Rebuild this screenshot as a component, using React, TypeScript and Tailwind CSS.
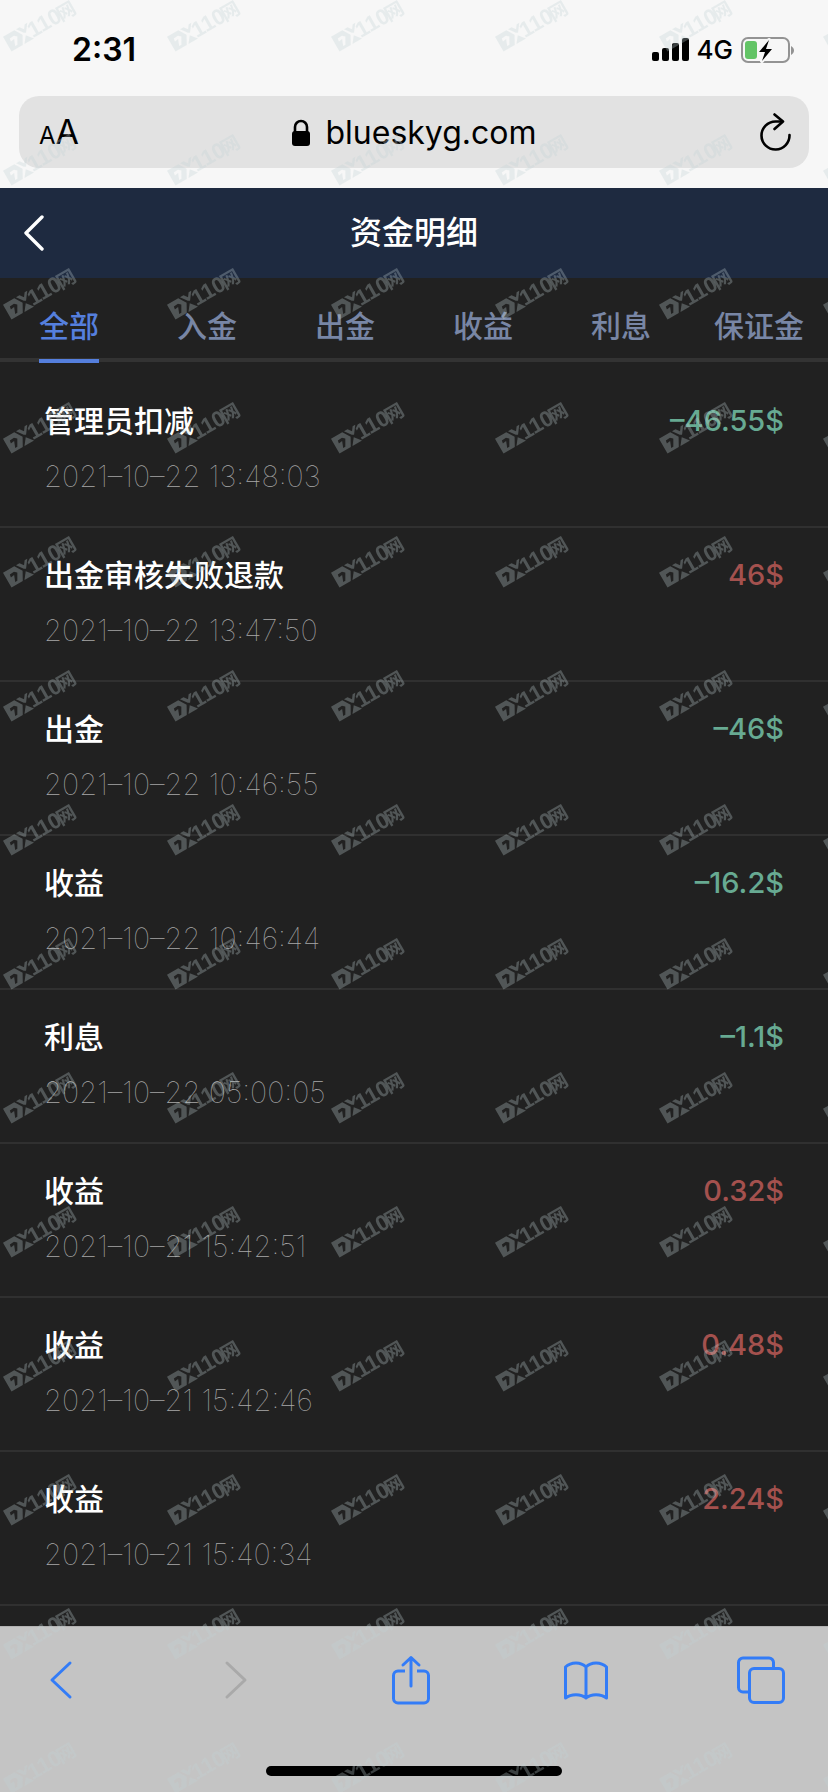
import React, { useState } from "react";

type Entry = { title: string; time: string; amount: string };

const tabs = ["全部", "入金", "出金", "收益", "利息", "保证金"];

const entries: Entry[] = [
  { title: "管理员扣减", time: "2021–10–22 13:48:03", amount: "–46.55$" },
  { title: "出金审核失败退款", time: "2021–10–22 13:47:50", amount: "46$" },
  { title: "出金", time: "2021–10–22 10:46:55", amount: "–46$" },
  { title: "收益", time: "2021–10–22 10:46:44", amount: "–16.2$" },
  { title: "利息", time: "2021–10–22 05:00:05", amount: "–1.1$" },
  { title: "收益", time: "2021–10–21 15:42:51", amount: "0.32$" },
  { title: "收益", time: "2021–10–21 15:42:46", amount: "0.48$" },
  { title: "收益", time: "2021–10–21 15:40:34", amount: "2.24$" },
];

function StatusBar() {
  return (
    <div className="flex h-24 items-center justify-between pt-1 pr-[34px] pl-[72px]">
      <span className="text-[32px] leading-10 font-semibold">2:31</span>
      <div className="flex items-center gap-2">
        <svg width="37" height="24" viewBox="0 0 37 24" aria-hidden="true">
          <rect x="0" y="14" width="7" height="9" rx="2" />
          <rect x="10" y="10" width="7" height="13" rx="2" />
          <rect x="20" y="5" width="7" height="18" rx="2" />
          <rect x="30" y="0" width="7" height="23" rx="2" />
        </svg>
        <span className="text-[26px] leading-8 font-medium">4G</span>
        <svg width="53" height="26" viewBox="0 0 53 26" aria-hidden="true">
          <rect x="1" y="1" width="47" height="24" rx="6" fill="none" stroke="#939393" strokeWidth="2" />
          <rect x="4" y="4" width="12" height="18" rx="3" fill="#63c466" />
          <path d="M28 3 18 15h6l-3 9 10-12h-6l3-9Z" fill="#000" stroke="#f7f7f7" strokeWidth="4" strokeLinejoin="round" paintOrder="stroke" />
          <path d="M50 9c4 2 4 7 0 9Z" fill="#939393" />
        </svg>
      </div>
    </div>
  );
}

function AddressBar() {
  return (
    <div className="mx-[19px] mb-5 flex h-[72px] items-center justify-between rounded-[20px] bg-[#e2e2e2] px-[18px]">
      <button type="button" aria-label="文字大小" className="flex w-12 items-baseline pt-1 pl-0.5">
        <span className="text-2xl leading-10">A</span>
        <span className="text-[34px] leading-10">A</span>
      </button>
      <div className="flex items-center gap-3.5 pt-0.5">
        <svg width="20" height="28" viewBox="0 0 20 28" aria-hidden="true">
          <rect x="1" y="12" width="18" height="15" rx="3" />
          <path d="M4 13V8a6 6 0 0 1 12 0v5" fill="none" stroke="#000" strokeWidth="2.6" />
        </svg>
        <span className="text-[32px] leading-10">blueskyg.com</span>
      </div>
      <button type="button" aria-label="刷新" className="flex w-12 justify-end">
        <svg width="32" height="38" viewBox="0 0 32 38" fill="none" stroke="#000" strokeWidth="2.6" strokeLinecap="round" strokeLinejoin="round" aria-hidden="true">
          <path d="M30.500 22A14 14 0 1 1 16.500 8.500h6.500" />
          <path d="m15.500 1.500 8.500 7-8.500 7.500" />
        </svg>
      </button>
    </div>
  );
}

function BottomBar() {
  return (
    <footer className="flex h-[166px] shrink-0 flex-col items-center justify-between border-t border-[#b2b2b2] bg-[#c4c4c4] pb-4">
      <nav className="flex h-[106px] w-full items-center justify-between pr-[43px] pl-[37px] text-[#337cf7]" aria-label="浏览器">
        <button type="button" aria-label="后退" className="flex w-12 justify-center">
          <svg width="24" height="40" viewBox="0 0 24 40" fill="none" stroke="currentColor" strokeWidth="3" strokeLinecap="round" strokeLinejoin="round">
            <path d="M21 3 3 20l18 17" />
          </svg>
        </button>
        <button type="button" aria-label="前进" disabled className="flex w-12 justify-center text-[#a9a9a9]">
          <svg width="24" height="40" viewBox="0 0 24 40" fill="none" stroke="currentColor" strokeWidth="3" strokeLinecap="round" strokeLinejoin="round">
            <path d="M3 3 21 20 3 37" />
          </svg>
        </button>
        <button type="button" aria-label="分享" className="flex w-12 justify-center">
          <svg width="40" height="50" viewBox="0 0 40 50" fill="none" stroke="currentColor" strokeWidth="3" strokeLinecap="round" strokeLinejoin="round">
            <path d="M14 16H7a4.500 4.500 0 0 0-4.500 4.500v23A4.500 4.500 0 0 0 7 48h26a4.500 4.500 0 0 0 4.500-4.500v-23A4.500 4.500 0 0 0 33 16h-7" strokeLinecap="butt" />
            <path d="M20 31V2.500M12 10l8-7.500L28 10" />
          </svg>
        </button>
        <button type="button" aria-label="书签" className="flex w-12 justify-center">
          <svg width="46" height="40" viewBox="0 0 46 40" fill="none" stroke="currentColor" strokeWidth="3" strokeLinecap="round" strokeLinejoin="round">
            <path d="M23 7C18 1.500 8 1.500 2.500 7v31C8 33.500 18 33.500 23 38c5-4.500 15-4.500 20.500 0V7C38 1.500 28 1.500 23 7Zm0 0v31" />
          </svg>
        </button>
        <button type="button" aria-label="标签页" className="flex w-12 justify-center">
          <svg width="48" height="48" viewBox="0 0 48 48" fill="none" stroke="currentColor" strokeWidth="3">
            <rect x="12.500" y="12.500" width="34" height="34" rx="4.500" />
            <path d="M12.500 36H6a4.500 4.500 0 0 1-4.500-4.500V6.500A4.500 4.500 0 0 1 6 2h26a4.500 4.500 0 0 1 4.500 4.500v6" />
          </svg>
        </button>
      </nav>
      <div className="h-2.5 w-[296px] rounded-full bg-black" />
    </footer>
  );
}

function Watermark() {
  return (
    <svg className="pointer-events-none absolute inset-0 h-full w-full" aria-hidden="true">
      <defs>
        <pattern id="brand" width="164" height="134" patternUnits="userSpaceOnUse">
          <g transform="translate(11.500 51.500) rotate(-30)" fill="#c1d1d5" fillOpacity="0.3">
            <path fillRule="evenodd" d="M0-17H13L18-9 13 0H0ZM5-12l-.5 3 4-.5L6-3h2.500l4-7L10-12.500Z" />
            <path d="M15-17h4l3 4 3-4h3l-6 8-2-1Z" />
            <path d="M15 0l5.500-7 5.500 7Z" />
            <text x="25" y="-1" fontSize="22" fontWeight="700" fontFamily="Liberation Sans, sans-serif">110</text>
            <text x="58" y="-1" fontSize="19" fontWeight="700" fontFamily="Noto Sans CJK SC, sans-serif">网</text>
          </g>
        </pattern>
      </defs>
      <rect width="100%" height="100%" fill="url(#brand)" />
    </svg>
  );
}

export default function App() {
  const [active, setActive] = useState(0);

  return (
    <div className="relative flex h-screen flex-col overflow-hidden bg-[#212121] font-['Inter','Noto_Sans_CJK_SC',sans-serif]">
      <header className="shrink-0 bg-[#f7f7f7] text-black">
        <StatusBar />
        <AddressBar />
      </header>

      <div className="grid h-[90px] shrink-0 grid-cols-[1fr_auto_1fr] items-center bg-[#1e2a40] px-6 text-white">
        <button type="button" aria-label="返回" className="justify-self-start">
          <svg width="20" height="36" viewBox="0 0 20 36" fill="none" stroke="currentColor" strokeWidth="3.4" strokeLinecap="round" strokeLinejoin="round">
            <path d="M18 2 2 18l16 16" />
          </svg>
        </button>
        <h1 className="text-[32px] leading-10 font-medium">资金明细</h1>
      </div>

      <div role="tablist" className="grid h-[84px] shrink-0 grid-cols-6 border-b-4 border-[#333333]">
        {tabs.map((tab, i) => (
          <button
            key={tab}
            type="button"
            role="tab"
            aria-selected={i === active}
            onClick={() => setActive(i)}
            className={
              i === active
                ? "-mb-[5px] flex justify-center text-[#557fdd]"
                : "-mb-[5px] flex justify-center text-[#7886a5]"
            }
          >
            <span
              className={
                i === active
                  ? "h-full border-b-4 border-[#557fdd] pt-7 text-[30px] leading-10 font-medium whitespace-nowrap"
                  : "h-full pt-7 text-[30px] leading-10 font-medium whitespace-nowrap"
              }
            >
              {tab}
            </span>
          </button>
        ))}
      </div>

      <main className="min-h-0 flex-1 overflow-hidden pt-3">
        <ul>
          {entries.map((e) => (
            <li key={e.time} className="h-[154px] border-b-2 border-[#303030] px-11 pt-[27px]">
              <div className="flex items-center justify-between text-[30px] leading-10 font-medium">
                <span className="text-white">{e.title}</span>
                <span className={e.amount.startsWith("–") ? "text-[29px] text-[#67aa92]" : "text-[29px] text-[#a4514e]"}>
                  {e.amount}
                </span>
              </div>
              <time className="mt-4 block text-[29px] leading-10 font-thin text-[#a8a8a8]">{e.time}</time>
            </li>
          ))}
        </ul>
      </main>

      <BottomBar />
      <Watermark />
    </div>
  );
}
